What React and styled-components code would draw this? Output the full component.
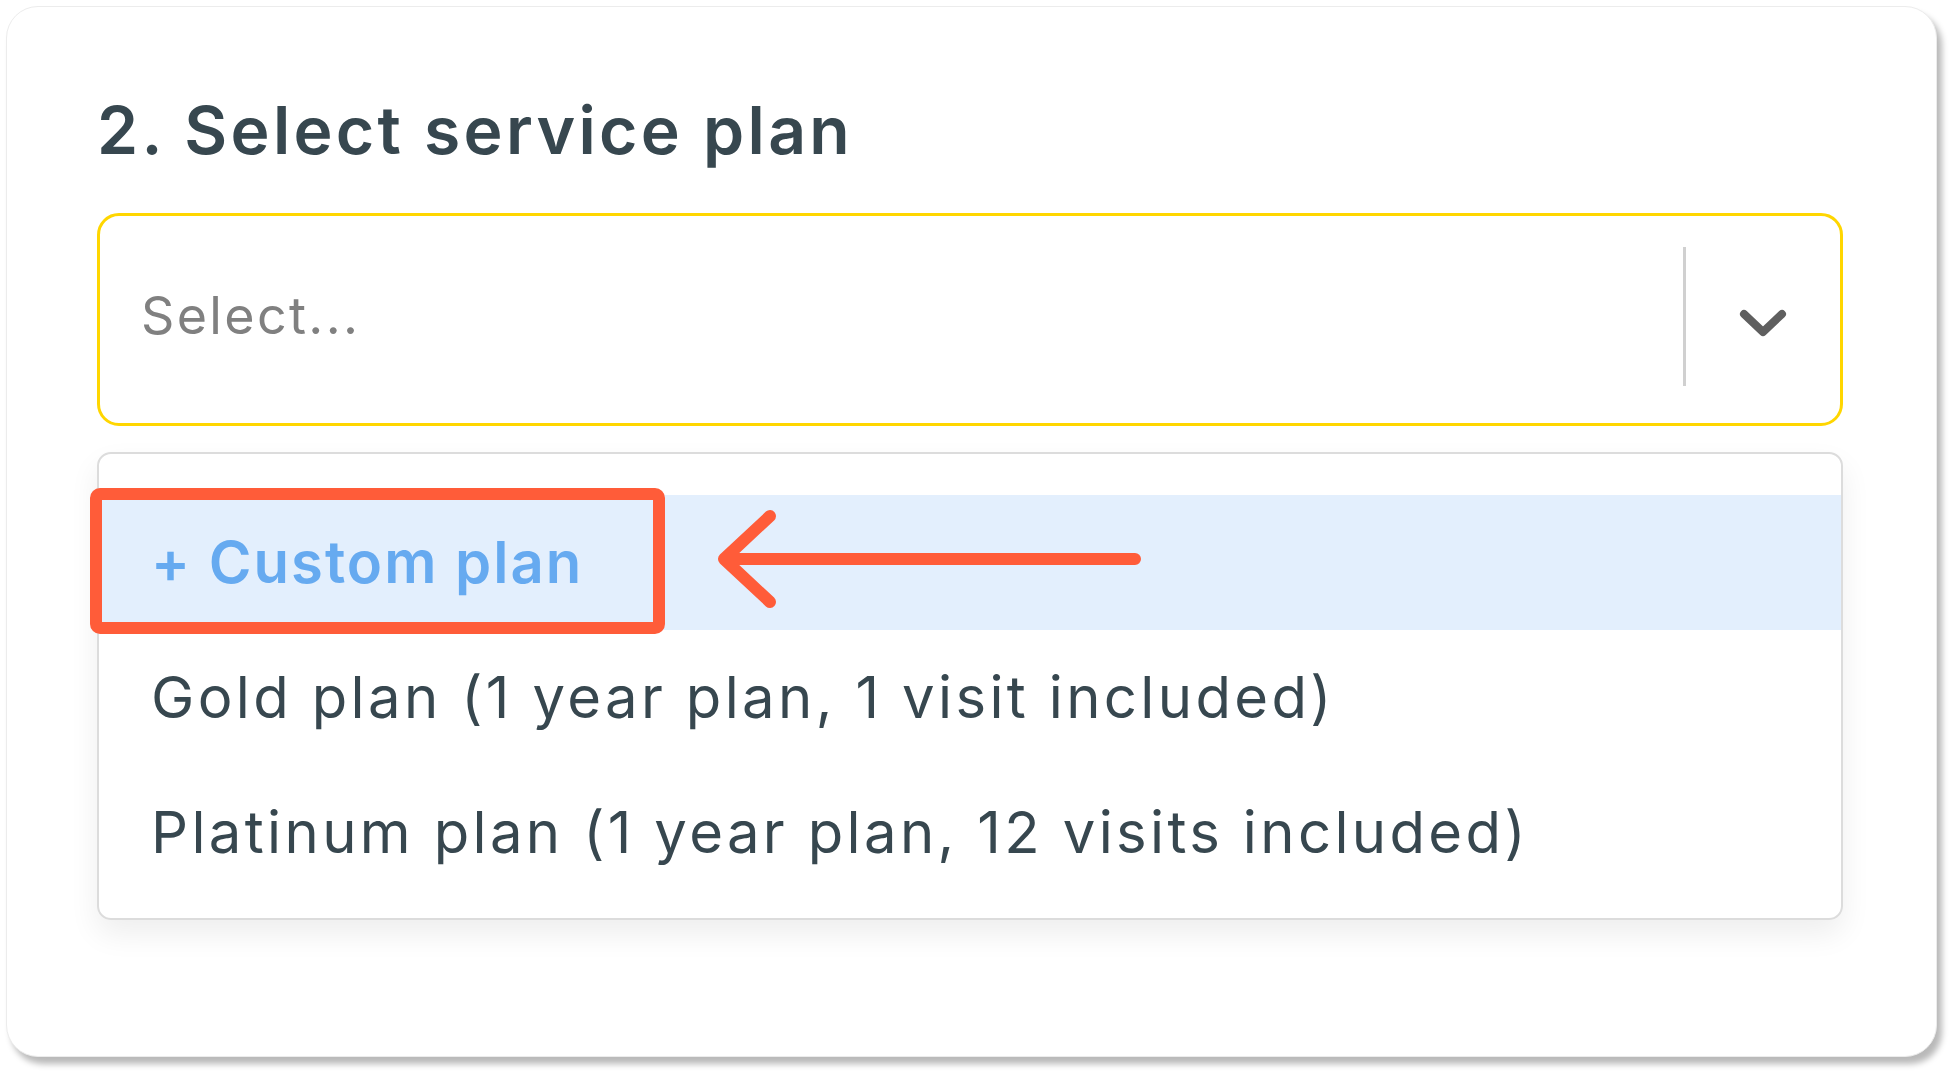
import React from 'react';
import styled, { createGlobalStyle } from 'styled-components';

const GlobalStyle = createGlobalStyle`
  html, body {
    margin: 0;
    padding: 0;
    background: #ffffff;
  }
  body {
    font-family: Inter, "Open Sans", sans-serif;
  }
`;

const plans = [
  { id: 'custom', label: '+ Custom plan', custom: true },
  { id: 'gold', label: 'Gold plan (1 year plan, 1 visit included)' },
  { id: 'platinum', label: 'Platinum plan (1 year plan, 12 visits included)' },
];

const App = () => {
  return (
    <Page>
      <GlobalStyle />
      <Card>
        <Title>2. Select service plan</Title>
        <SelectBox>
          <Placeholder>Select...</Placeholder>
          <Divider />
          <ChevronWrap>
            <svg width="52" height="34" viewBox="0 0 52 34">
              <path
                d="M7 9 L26 27 L45 9"
                fill="none"
                stroke="#5f5f5f"
                strokeWidth="8"
                strokeLinecap="round"
                strokeLinejoin="round"
              />
            </svg>
          </ChevronWrap>
        </SelectBox>
        <Menu>
          {plans.map(p => (
            <Option key={p.id} $active={p.custom}>
              {p.label}
            </Option>
          ))}
          <Highlight />
          <Arrow width="440" height="110" viewBox="0 0 440 110">
            <path
              d="M60 12 L14 55 L60 98 M14 55 L425 55"
              fill="none"
              stroke="#FF5C39"
              strokeWidth="12"
              strokeLinecap="round"
              strokeLinejoin="round"
            />
          </Arrow>
        </Menu>
      </Card>
    </Page>
  );
};
export default App;

const Page = styled.div`
  padding: 6px;
  width: 1951px;
  height: 1072px;
  box-sizing: border-box;
`;

const Card = styled.div`
  width: 1931px;
  height: 1051px;
  box-sizing: border-box;
  background: #fff;
  border-radius: 32px;
  border: 1px solid #ececec;
  box-shadow: 5px 7px 6px rgba(0, 0, 0, 0.28);
  padding: 83px 93px 0 90px;
  display: flex;
  flex-direction: column;
`;

const Title = styled.h2`
  margin: 0;
  font-size: 66px;
  line-height: 80px;
  font-weight: 600;
  letter-spacing: 0.05em;
  color: #37474f;
`;

const SelectBox = styled.div`
  margin-top: 43px;
  height: 213px;
  box-sizing: border-box;
  border: 3px solid #ffd600;
  border-radius: 22px;
  display: flex;
  align-items: center;
  padding-left: 41px;
`;

const Placeholder = styled.div`
  flex: 1;
  font-size: 52px;
  letter-spacing: 0.045em;
  color: #808080;
  padding-bottom: 8px;
`;

const Divider = styled.div`
  width: 3px;
  height: 139px;
  background: #d0d0d0;
  margin-bottom: 6px;
`;

const ChevronWrap = styled.div`
  width: 154px;
  display: flex;
  justify-content: center;
  align-items: center;
  padding-top: 4px;
`;

const Menu = styled.div`
  position: relative;
  margin-top: 26px;
  height: 468px;
  box-sizing: border-box;
  border: 2px solid #dcdcdc;
  border-radius: 14px;
  box-shadow: 0 14px 30px rgba(0, 0, 0, 0.07);
  padding-top: 41px;
  display: flex;
  flex-direction: column;
`;

const Option = styled.div`
  height: 135px;
  display: flex;
  align-items: center;
  padding-left: 52px;
  padding-bottom: 2px;
  box-sizing: border-box;
  font-size: 58px;
  font-weight: ${p => (p.$active ? 600 : 400)};
  letter-spacing: ${p => (p.$active ? '0.035em' : '0.058em')};
  color: ${p => (p.$active ? '#66aaf0' : '#37474f')};
  background: ${p => (p.$active ? '#e3effd' : 'transparent')};
`;

const Highlight = styled.div`
  position: absolute;
  left: -9px;
  top: 34px;
  width: 575px;
  height: 146px;
  box-sizing: border-box;
  border: 12px solid #ff5c39;
  border-radius: 10px;
`;

const Arrow = styled.svg`
  position: absolute;
  left: 611px;
  top: 50px;
`;
